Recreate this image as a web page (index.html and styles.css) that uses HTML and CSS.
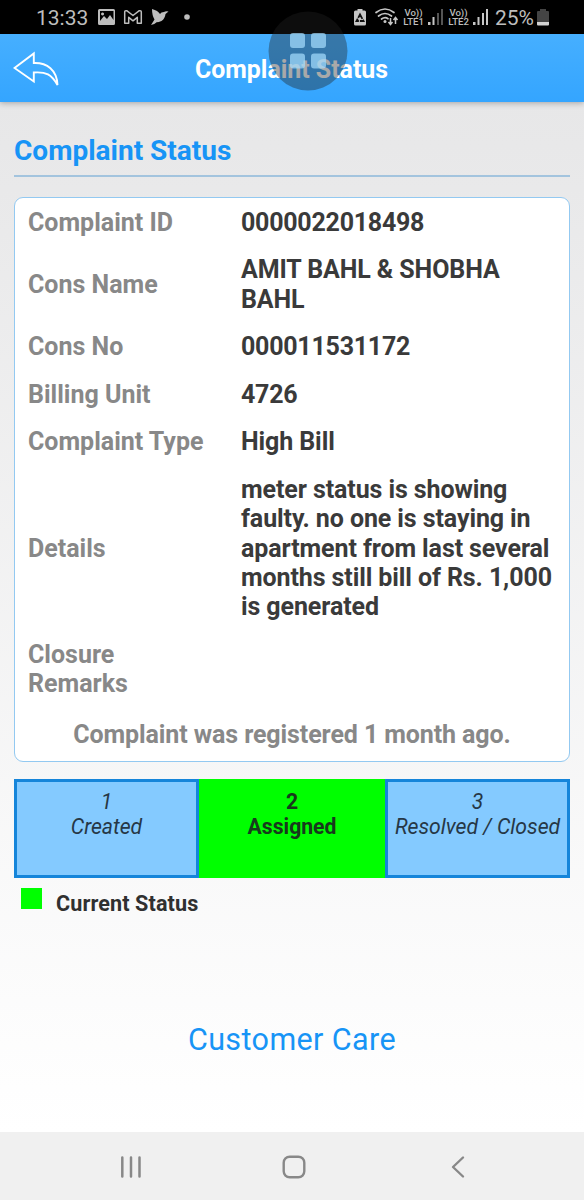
FILE: index.html
```html
<!DOCTYPE html>
<html lang="en">
<head>
<meta charset="utf-8">
<title>Complaint Status</title>
<link rel="stylesheet" href="styles.css">
</head>
<body>
<div class="screen">
  <div class="statusbar">
    <span class="clock">13:33</span>
    <svg class="notifications" width="94" height="34" viewBox="0 0 94 34">
      <path fill="#bdbdbd" fill-rule="evenodd" d="M1.500 9h14q1.500 0 1.500 1.500v13q0 1.500-1.500 1.500h-14q-1.500 0-1.500-1.500v-13q0-1.500 1.500-1.500zM2 11v10l4-5 3 3 3-4 3.500 5v-9zM4.500 12.500a1.500 1.500 0 1 0 .1 0z"/>
      <path fill="none" stroke="#bdbdbd" stroke-width="1.500" stroke-linejoin="round" d="M26.700 23.300v-11.300q0-1.500 2-1.300l6.300 4.800 6.300-4.800q2-.2 2 1.300v11.300h-4v-6l-4.300 3.500-4.300-3.500v6z"/>
      <path fill="#bdbdbd" d="M54 9q6 1.500 8 5 1-2 4-2 1.500-1 4.500-.5l-3 2.500q-.5 4.500-4 7-3 1.500-4.500 1-2.500 2.500-6 3l3.500-5.500q-2.500-4-2.500-10.500z"/>
      <circle cx="89" cy="17" r="2.800" fill="#bdbdbd"/>
    </svg>
    <svg class="radios" width="48" height="34" viewBox="0 0 48 34">
      <path fill="#c6c6c6" d="M3.500 9h5v1.500h2q1.500 0 1.500 1.500v12q0 1.500-1.500 1.500h-9q-1.500 0-1.500-1.500v-12q0-1.500 1.500-1.500h2z"/>
      <path fill="none" stroke="#111" stroke-width="1.800" stroke-dasharray="5 1" d="M6 14.500l3.500 6.500h-7z"/>
      <g fill="none" stroke="#c6c6c6" stroke-width="1.700" stroke-linecap="round">
        <path d="M22 12.500q9-7 18 0M24.500 16q6.500-5 13 0M27.500 19q3.500-2.500 6.500-.3"/>
      </g>
      <circle cx="31" cy="21.500" r="1.500" fill="#c6c6c6"/>
      <path fill="none" stroke="#c6c6c6" stroke-width="1.500" d="M36.500 18v6M34.500 22l2 2.500 2-2.500M41.500 24v-6M39.500 20l2-2.500 2 2.500"/>
    </svg>
    <span class="volte"><span>Vo))</span><span>LTE1</span></span>
    <svg class="signal" width="16" height="34" viewBox="0 0 16 34">
      <path fill="#c6c6c6" d="M0 22h2.500v3h-2.500zM4.500 17h2v8h-2z"/>
      <path fill="#555" d="M9 13h2v12h-2zM13 9h2v16h-2z"/>
    </svg>
    <span class="volte volte-second"><span>Vo))</span><span>LTE2</span></span>
    <svg class="signal" width="16" height="34" viewBox="0 0 16 34">
      <path fill="#c6c6c6" d="M0 22h2.500v3h-2.500zM4.500 17h2v8h-2zM9 13h2v12h-2zM13 9h2v16h-2z"/>
    </svg>
    <span class="percent">25%</span>
    <svg class="battery" width="12" height="34" viewBox="0 0 12 34">
      <path fill="#444" d="M3 9h6v2h2q1 0 1 1v10h-12v-10q0-1 1-1h2z"/>
      <path fill="#d2d2d2" d="M0 22h12v2.500q0 1-1 1h-10q-1 0-1-1z"/>
    </svg>
  </div>

  <header class="appbar">
    <svg class="back" width="46" height="36" viewBox="0 0 46 36">
      <path fill="none" stroke="#fff" stroke-width="1.900" d="M1.500 17L20.800 2.500v9.500C34 11.500 44 19 44.500 34 38.500 23.500 33 20.500 20.800 21.500v9z"/>
    </svg>
    <h1 class="appbar-title">Complaint Status</h1>
  </header>

  <svg class="assist" width="80" height="80" viewBox="0 0 80 80">
    <circle cx="40" cy="40" r="39.500" fill="#222" fill-opacity=".39"/>
    <g fill="#a6deff" fill-opacity=".7">
      <rect x="22" y="22" width="15" height="15" rx="3"/>
      <rect x="43" y="22" width="15" height="15" rx="3"/>
      <rect x="22" y="42.500" width="15" height="15" rx="3"/>
      <rect x="43" y="42.500" width="15" height="15" rx="3"/>
    </g>
  </svg>

  <main class="content">
    <h2 class="heading">Complaint Status</h2>
    <section class="card">
      <dl class="details">
        <dt>Complaint ID</dt><dd class="number">0000022018498</dd>
        <dt>Cons Name</dt><dd>AMIT BAHL &amp; SHOBHA<br>BAHL</dd>
        <dt>Cons No</dt><dd class="number">000011531172</dd>
        <dt>Billing Unit</dt><dd class="number">4726</dd>
        <dt>Complaint Type</dt><dd>High Bill</dd>
        <dt>Details</dt><dd>meter status is showing<br>faulty. no one is staying in<br>apartment from last several<br>months still bill of Rs. 1,000<br>is generated</dd>
        <dt>Closure<br>Remarks</dt><dd></dd>
      </dl>
      <p class="registered">Complaint was registered 1 month ago.</p>
    </section>
    <div class="steps">
      <div class="step">1<br>Created</div>
      <div class="step step-current">2<br>Assigned</div>
      <div class="step">3<br>Resolved / Closed</div>
    </div>
    <div class="legend"><span class="swatch"></span><span>Current Status</span></div>
    <a class="care">Customer Care</a>
  </main>

  <nav class="navbar">
    <svg width="22" height="24" viewBox="0 0 22 24"><path stroke="#888" stroke-width="2.500" stroke-linecap="round" d="M2.300 2.500v19M11 2.500v19M19.500 2.500v19"/></svg>
    <svg class="home" width="24" height="24" viewBox="0 0 24 24"><rect x="1.700" y="1.700" width="20.600" height="20.600" rx="6" fill="none" stroke="#888" stroke-width="2.400"/></svg>
    <svg width="14" height="24" viewBox="0 0 14 24"><path fill="none" stroke="#888" stroke-width="2.400" stroke-linecap="round" stroke-linejoin="round" d="M12 2.500L2 12l10 9.500"/></svg>
  </nav>
</div>
</body>
</html>
```

FILE: styles.css
```css
* { box-sizing: border-box; }
body { margin: 0; font-family: Roboto, "Liberation Sans", sans-serif; }
h1, h2, p, dl, dd { margin: 0; }
svg { display: block; flex: none; }

.screen {
  position: relative;
  width: 584px;
  height: 1200px;
  display: flex;
  flex-direction: column;
  overflow: hidden;
}

.statusbar {
  height: 34px;
  flex: none;
  display: flex;
  padding-left: 36px;
  background: #000;
  color: #bdbdbd;
  white-space: nowrap;
}
.clock { width: 62px; font-size: 21px; line-height: 37px; }
.radios { margin-left: 162px; }
.volte {
  width: 23px;
  margin: 8px 3px 0 0;
  display: flex;
  flex-direction: column;
  align-items: center;
  font-size: 9.6px;
  font-weight: 500;
  line-height: 9px;
}
.volte-second { margin-left: 3px; }
.percent { width: 42px; margin-left: 6px; font-size: 21px; line-height: 37px; }

.appbar {
  height: 68px;
  flex: none;
  display: grid;
  grid-template-columns: 60px 1fr 60px;
  align-items: center;
  padding-left: 13px;
  padding-right: 14px;
  background: linear-gradient(#46afff, #34a5ff);
  box-shadow: 0 1px 6px rgba(0, 0, 0, .3);
  z-index: 1;
}
.back { margin-top: 2px; }
.appbar-title {
  padding-top: 3px;
  color: #fff;
  font-size: 24.900px;
  line-height: 30px;
  text-align: center;
  white-space: nowrap;
}

.assist { position: absolute; left: 268px; top: 11px; z-index: 2; }

.content {
  flex: 1;
  display: flex;
  flex-direction: column;
  padding: 31px 14px 0;
  background: linear-gradient(#e7e7e8, #fff);
}
.heading {
  height: 44px;
  flex: none;
  border-bottom: 2px solid #a3c4de;
  color: #1794f6;
  font-size: 28px;
  line-height: 36px;
}
.card {
  height: 565px;
  flex: none;
  margin-top: 20px;
  border: 1px solid #93c9f1;
  border-radius: 9px;
  background: #fff;
  font-size: 25px;
  font-weight: 700;
  line-height: 29.3px;
}
.details { display: grid; grid-template-columns: 213px 1fr; padding: .6px 0 0 13px; align-items: center; }
.details dt, .details dd { padding: 9.150px 0; white-space: nowrap; }
.details dt { color: #888; }
.details dd { color: #3a3a3a; letter-spacing: -.1px; }
.details .number { letter-spacing: -.25px; }
.registered { margin-top: 13px; color: #888; text-align: center; letter-spacing: -.1px; }

.steps {
  height: 99px;
  flex: none;
  margin-top: 17px;
  display: grid;
  grid-template-columns: 185px 186px 185px;
}
.step {
  padding-top: 7px;
  border: 3px solid #1585da;
  background: #84caff;
  color: #263746;
  font-size: 21.200px;
  font-style: italic;
  line-height: 25px;
  text-align: center;
  white-space: nowrap;
}
.step-current { border-color: #0f0; background: #0f0; color: #18391d; font-style: normal; font-weight: 700; }

.legend {
  display: flex;
  gap: 14px;
  margin-top: 10px;
  padding-left: 7px;
  color: #303030;
  font-size: 21.600px;
  font-weight: 700;
  letter-spacing: .1px;
  line-height: 32px;
}
.swatch { width: 21px; height: 21px; background: #0f0; }
.care { margin-top: 101px; color: #1794f6; font-size: 30.500px; letter-spacing: .4px; line-height: 38px; text-align: center; }

.navbar {
  height: 68px;
  flex: none;
  display: flex;
  align-items: center;
  justify-content: space-between;
  padding: 2px 119px 0 120px;
  background: #f0f0f0;
}
.home { margin-right: 6px; }
```
